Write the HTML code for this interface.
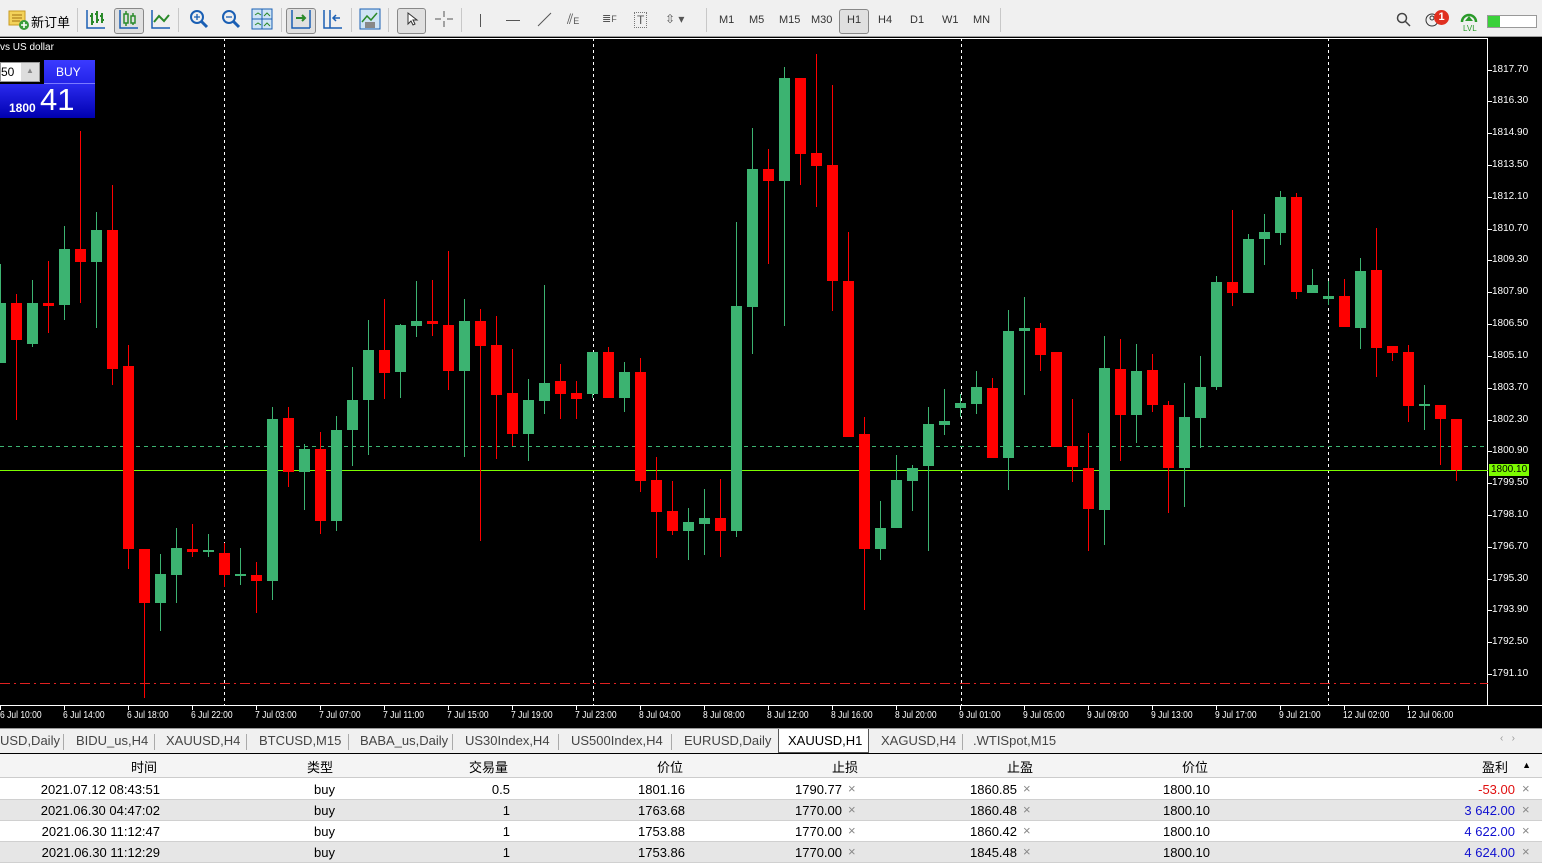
<!DOCTYPE html>
<html><head><meta charset="utf-8">
<style>
*{margin:0;padding:0;box-sizing:border-box}
body{width:1542px;height:866px;overflow:hidden;background:#000;font-family:"Liberation Sans","Noto Sans CJK SC",sans-serif;position:relative}
#tb{position:absolute;left:0;top:0;width:1542px;height:37px;background:#f0f0f0;border-bottom:1px solid #a0a0a0}
.ic{position:absolute;top:8px}
.sep{position:absolute;top:8px;width:1px;height:24px;background:#c8c8c8}
.tf{position:absolute;top:14px;font-size:11px;color:#333}
#chart{position:absolute;left:0;top:38px;width:1542px;height:690px;background:#000}
.pl{position:absolute;left:1492px;font-size:10px;color:#fff;font-family:"Liberation Sans",sans-serif}
.tl{position:absolute;top:710px;font-size:10px;color:#fff;white-space:nowrap;transform:scaleX(.85);transform-origin:left}
#tabs{position:absolute;left:0;top:728px;width:1542px;height:25px;background:#f0f0f0;border-top:1px solid #999}
.tab{position:absolute;top:4px;font-size:13px;color:#444;white-space:nowrap}
.ts{position:absolute;top:5px;width:1px;height:16px;background:#aaa}
#tbl{position:absolute;left:0;top:754px;width:1542px;height:112px;background:#fff;font-size:13px;color:#000}
.row{position:absolute;left:0;width:1542px;height:21px;border-bottom:1px solid #d0d0d0}
.c{position:absolute;top:3px;text-align:right;white-space:nowrap}
.x{position:absolute;top:2px;color:#888;font-size:13px}
</style></head><body>
<div id="tb">
 <svg class="ic" style="left:8px;top:9px" width="22" height="22"><rect x="1" y="2" width="16" height="14" fill="#f3d25a" stroke="#c89a20"/><line x1="4" y1="6" x2="14" y2="6" stroke="#a07010"/><line x1="4" y1="9" x2="14" y2="9" stroke="#a07010"/><line x1="4" y1="12" x2="12" y2="12" stroke="#a07010"/><circle cx="16" cy="16" r="5" fill="#3a9d3a"/><path d="M16 13v6M13 16h6" stroke="#fff" stroke-width="1.6"/></svg>
 <div style="position:absolute;left:31px;top:12px;font-size:13px;color:#000">新订单</div>
 <div class="sep" style="left:77px"></div>
 <svg class="ic" style="left:85px" width="22" height="22" stroke="#1a5fb4" fill="none" stroke-width="1.5"><path d="M2 2v18h18"/><path d="M7 5v12M5 8h2M7 14h2M12 3v12M10 6h2M12 12h2M17 5v10M15 8h2M17 12h2" stroke="#2a8a2a" stroke-width="2"/></svg>
 <div style="position:absolute;left:114px;top:8px;width:30px;height:26px;border:1px solid #888;border-radius:3px;background:#e0e0e0"></div>
 <svg class="ic" style="left:118px" width="22" height="22" stroke="#1a5fb4" fill="none" stroke-width="1.5"><path d="M2 2v18h18"/><rect x="6" y="6" width="4" height="9" stroke="#2a8a2a"/><rect x="13" y="8" width="4" height="7" stroke="#2a8a2a"/><path d="M8 3v3M8 15v3M15 5v3M15 15v2" stroke="#2a8a2a"/></svg>
 <svg class="ic" style="left:150px" width="22" height="22" stroke="#1a5fb4" fill="none" stroke-width="1.5"><path d="M2 2v18h18"/><path d="M4 14l5-6 5 5 5-6" stroke="#2a8a2a" stroke-width="2"/></svg>
 <div class="sep" style="left:178px"></div>
 <svg class="ic" style="left:188px" width="22" height="22" fill="none" stroke="#1a5fb4" stroke-width="2"><circle cx="9" cy="9" r="6"/><path d="M13 13l6 6" stroke-width="3"/><path d="M6 9h6M9 6v6" stroke-width="1.3"/></svg>
 <svg class="ic" style="left:220px" width="22" height="22" fill="none" stroke="#1a5fb4" stroke-width="2"><circle cx="9" cy="9" r="6"/><path d="M13 13l6 6" stroke-width="3"/><path d="M6 9h6" stroke-width="1.3"/></svg>
 <svg class="ic" style="left:251px" width="22" height="22"><rect x="1" y="1" width="20" height="20" fill="#cfe4f5" stroke="#1a5fb4"/><path d="M1 11h20M11 1v20" stroke="#1a5fb4"/><path d="M4 7l3-2 3 2M13 8l3-3 3 3M4 17l3-2 3 2M13 18l3-3 3 3" stroke="#2a8a2a" fill="none"/></svg>
 <div class="sep" style="left:281px"></div>
 <div style="position:absolute;left:286px;top:8px;width:30px;height:26px;border:1px solid #888;border-radius:3px;background:#e0e0e0"></div>
 <svg class="ic" style="left:290px" width="22" height="22" fill="none" stroke="#1a5fb4" stroke-width="1.5"><path d="M2 2v18h18M20 2v18"/><path d="M6 10h9M12 7l3 3-3 3" stroke="#2a8a2a" stroke-width="2"/></svg>
 <svg class="ic" style="left:322px" width="22" height="22" fill="none" stroke="#1a5fb4" stroke-width="1.5"><path d="M2 2v18h18M8 2v18"/><path d="M18 10h-6M14 7l-3 3 3 3" stroke="#1a5fb4"/></svg>
 <div class="sep" style="left:351px"></div>
 <svg class="ic" style="left:359px" width="22" height="22"><rect x="1" y="1" width="20" height="20" fill="#cfe4f5" stroke="#1a5fb4"/><path d="M3 14l5-6 4 4 6-7" stroke="#2a8a2a" fill="none" stroke-width="1.5"/><rect x="6" y="14" width="10" height="6" fill="#888"/></svg>
 <div class="sep" style="left:388px"></div>
 <div style="position:absolute;left:397px;top:8px;width:29px;height:26px;border:1px solid #888;border-radius:3px;background:#e0e0e0"></div>
 <svg class="ic" style="left:403px" width="18" height="22"><path d="M5 5v11l3-3 2 4 2-1-2-4h4z" fill="#fff" stroke="#333"/></svg>
 <svg class="ic" style="left:433px" width="22" height="22" stroke="#555"><path d="M11 3v6M11 13v6M2 11h6M14 11h6"/></svg>
 <div class="sep" style="left:461px"></div>
 <div style="position:absolute;left:480px;top:14px;width:1px;height:13px;background:#555"></div>
 <div style="position:absolute;left:506px;top:20px;width:14px;height:1px;background:#555"></div>
 <svg class="ic" style="left:535px" width="20" height="22"><path d="M3 18L16 5" stroke="#555"/></svg>
 <div style="position:absolute;left:567px;top:11px;font-size:14px;color:#555">⫽<span style="font-size:9px">E</span></div>
 <div style="position:absolute;left:602px;top:12px;font-size:11px;color:#555">≣<span style="font-size:9px">F</span></div>
 <div style="position:absolute;left:634px;top:12px;font-size:12px;color:#555;border:1px dotted #777;padding:0 2px">T</div>
 <div style="position:absolute;left:665px;top:12px;font-size:12px;color:#555">⇳ ▾</div>
 <div class="sep" style="left:706px"></div>
 <div class="tf" style="left:719px">M1</div><div class="tf" style="left:749px">M5</div><div class="tf" style="left:779px">M15</div><div class="tf" style="left:811px">M30</div>
 <div style="position:absolute;left:839px;top:9px;width:30px;height:25px;border:1px solid #888;border-radius:3px;background:#e0e0e0"></div>
 <div class="tf" style="left:847px">H1</div><div class="tf" style="left:878px">H4</div><div class="tf" style="left:910px">D1</div><div class="tf" style="left:942px">W1</div><div class="tf" style="left:973px">MN</div>
 <div class="sep" style="left:1000px"></div>
 <svg class="ic" style="left:1396px;top:12px" width="16" height="16" fill="none" stroke="#444" stroke-width="1.5"><circle cx="6" cy="6" r="4.5"/><path d="M9 9l5 5"/></svg>
 <svg class="ic" style="left:1425px;top:12px" width="16" height="16" fill="none" stroke="#333"><circle cx="7" cy="8" r="6"/><circle cx="7" cy="6" r="2"/></svg>
 <div style="position:absolute;left:1434px;top:10px;width:15px;height:15px;border-radius:50%;background:#e03020;color:#fff;font-size:11px;text-align:center;line-height:15px;font-weight:bold">1</div>
 <svg class="ic" style="left:1459px;top:10px" width="20" height="22"><path d="M3 12a7 7 0 0 1 14 0" stroke="#2a9a2a" stroke-width="2.5" fill="none"/><path d="M10 6l-4 5h8z" fill="#2a9a2a"/><text x="4" y="21" font-size="8" fill="#2a9a2a" font-family="Liberation Sans">LVL</text></svg>
 <div style="position:absolute;left:1487px;top:15px;width:50px;height:13px;border:1px solid #999;background:#fff"><div style="width:12px;height:11px;background:#3ad13a"></div></div>
</div>
<div id="chart">
<svg id="sv" width="1542" height="690" style="position:absolute;left:0;top:0"></svg>
<div style="position:absolute;left:0;top:4px;font-size:10px;color:#fff">vs US dollar</div>
<div style="position:absolute;left:0;top:24px;width:40px;height:20px;background:#fff;border:1px solid #999;font-size:12px;line-height:18px;color:#000">50</div>
<div style="position:absolute;left:21px;top:25px;width:18px;height:18px;background:#ddd;font-size:8px;text-align:center;line-height:16px;color:#888">▲</div>
<div style="position:absolute;left:44px;top:22px;width:51px;height:58px;background:linear-gradient(#3b3bff,#0000c8)"></div>
<div style="position:absolute;left:0;top:46px;width:95px;height:34px;background:linear-gradient(#2a2aee,#0000b0)"></div>
<div style="position:absolute;left:44px;top:45px;width:51px;height:1px;background:#7a7aff"></div>
<div style="position:absolute;left:56px;top:27px;font-size:12px;color:#fff">BUY</div>
<div style="position:absolute;left:9px;top:63px;font-size:12px;color:#fff;font-weight:bold">1800</div>
<div style="position:absolute;left:40px;top:44px;font-size:31px;color:#fff">41</div>
<div class="pl" style="top:26px">1817.70</div><div class="pl" style="top:57px">1816.30</div><div class="pl" style="top:89px">1814.90</div><div class="pl" style="top:121px">1813.50</div><div class="pl" style="top:153px">1812.10</div><div class="pl" style="top:185px">1810.70</div><div class="pl" style="top:216px">1809.30</div><div class="pl" style="top:248px">1807.90</div><div class="pl" style="top:280px">1806.50</div><div class="pl" style="top:312px">1805.10</div><div class="pl" style="top:344px">1803.70</div><div class="pl" style="top:376px">1802.30</div><div class="pl" style="top:407px">1800.90</div><div class="pl" style="top:439px">1799.50</div><div class="pl" style="top:471px">1798.10</div><div class="pl" style="top:503px">1796.70</div><div class="pl" style="top:535px">1795.30</div><div class="pl" style="top:566px">1793.90</div><div class="pl" style="top:598px">1792.50</div><div class="pl" style="top:630px">1791.10</div>
<div style="position:absolute;left:1489px;top:426px;width:40px;height:12px;background:#7cfc00;color:#000;font-size:10px;line-height:12px;padding-left:2px">1800.10</div>
</div>
<div style="position:absolute;left:0;top:0;width:1542px;height:0">
<div class="tl" style="left:0">6 Jul 10:00</div><div class="tl" style="left:63px">6 Jul 14:00</div><div class="tl" style="left:127px">6 Jul 18:00</div><div class="tl" style="left:191px">6 Jul 22:00</div><div class="tl" style="left:255px">7 Jul 03:00</div><div class="tl" style="left:319px">7 Jul 07:00</div><div class="tl" style="left:383px">7 Jul 11:00</div><div class="tl" style="left:447px">7 Jul 15:00</div><div class="tl" style="left:511px">7 Jul 19:00</div><div class="tl" style="left:575px">7 Jul 23:00</div><div class="tl" style="left:639px">8 Jul 04:00</div><div class="tl" style="left:703px">8 Jul 08:00</div><div class="tl" style="left:767px">8 Jul 12:00</div><div class="tl" style="left:831px">8 Jul 16:00</div><div class="tl" style="left:895px">8 Jul 20:00</div><div class="tl" style="left:959px">9 Jul 01:00</div><div class="tl" style="left:1023px">9 Jul 05:00</div><div class="tl" style="left:1087px">9 Jul 09:00</div><div class="tl" style="left:1151px">9 Jul 13:00</div><div class="tl" style="left:1215px">9 Jul 17:00</div><div class="tl" style="left:1279px">9 Jul 21:00</div><div class="tl" style="left:1343px">12 Jul 02:00</div><div class="tl" style="left:1407px">12 Jul 06:00</div>
</div>
<div id="tabs">
<div class="tab" style="left:0">USD,Daily</div><div class="ts" style="left:63px"></div>
<div class="tab" style="left:76px">BIDU_us,H4</div><div class="ts" style="left:154px"></div>
<div class="tab" style="left:166px">XAUUSD,H4</div><div class="ts" style="left:246px"></div>
<div class="tab" style="left:259px">BTCUSD,M15</div><div class="ts" style="left:348px"></div>
<div class="tab" style="left:360px">BABA_us,Daily</div><div class="ts" style="left:452px"></div>
<div class="tab" style="left:465px">US30Index,H4</div><div class="ts" style="left:558px"></div>
<div class="tab" style="left:571px">US500Index,H4</div><div class="ts" style="left:671px"></div>
<div class="tab" style="left:684px">EURUSD,Daily</div>
<div style="position:absolute;left:778px;top:0;width:91px;height:24px;background:#fff;border:1px solid #555;border-top:none"></div>
<div class="tab" style="left:788px;color:#000">XAUUSD,H1</div>
<div class="tab" style="left:881px">XAGUSD,H4</div><div class="ts" style="left:962px"></div>
<div class="tab" style="left:973px">.WTISpot,M15</div>
<div class="tab" style="left:1500px;font-size:10px;color:#999">‹ &nbsp; ›</div>
</div>
<div id="tbl">
<div class="row" style="top:0;height:24px;background:#f4f4f4;border-bottom:1px solid #ccc">
<div class="c" style="right:1385px">时间</div><div class="c" style="right:1209px">类型</div><div class="c" style="right:1034px">交易量</div><div class="c" style="right:859px">价位</div><div class="c" style="right:684px">止损</div><div class="c" style="right:509px">止盈</div><div class="c" style="right:334px">价位</div><div class="c" style="right:34px">盈利</div><div class="c" style="right:11px;font-size:9px;top:6px">▲</div>
</div>
<div id="rows"></div>
</div>
<script>
var d=[["g",264,303,363,363],["r",294,303,340,420],["g",280,303,344,347],["r",261,303,306,333],["g",226,249,305,320],["r",131,249,262,303],["g",212,230,262,328],["r",185,230,369,385],["r",345,366,549,569],["r",549,549,603,698],["g",554,574,603,631],["g",528,548,575,603],["r",524,549,552,557],["g",534,550,552,557],["r",543,553,575,587],["g",548,574,576,585],["r",562,575,581,613],["g",407,419,581,600],["r",407,418,472,487],["g",444,449,472,510],["r",432,449,521,534],["g",416,430,521,531],["g",367,400,430,466],["g",320,350,400,455],["r",299,350,373,399],["g",324,325,372,398],["g",281,321,326,337],["r",280,321,324,336],["r",251,325,371,390],["g",299,321,371,457],["r",309,321,346,541],["r",316,345,395,459],["r",349,393,434,446],["g",379,400,434,461],["g",285,383,401,414],["r",364,381,394,419],["r",381,393,399,419],["g",352,352,394,398],["r",347,352,398,398],["g",362,372,398,412],["r",358,372,481,492],["r",457,480,512,558],["r",481,511,531,535],["g",508,522,531,560],["g",489,518,524,555],["r",479,518,531,557],["g",222,306,531,537],["g",128,169,307,354],["r",149,169,181,264],["g",67,78,181,326],["r",78,78,154,185],["r",54,153,166,207],["r",85,165,281,311],["r",232,281,437,437],["r",417,434,549,610],["g",501,528,549,560],["g",455,480,528,528],["g",465,468,481,511],["g",407,424,466,551],["g",389,421,425,435],["g",394,403,408,417],["g",371,387,404,414],["r",378,388,458,458],["g",310,331,458,490],["g",297,328,331,395],["r",323,328,355,371],["r",352,352,447,447],["r",399,446,467,482],["r",433,468,509,551],["g",336,368,510,545],["r",339,369,415,461],["g",344,371,415,443],["r",354,370,405,412],["r",401,405,468,513],["g",383,417,468,507],["g",356,387,418,448],["g",276,282,387,390],["r",210,282,293,306],["g",234,239,293,293],["g",214,232,239,265],["g",191,197,233,245],["r",193,197,292,299],["g",269,285,293,293],["g",281,296,299,305],["r",279,296,327,327],["g",258,271,328,349],["r",228,270,348,377],["r",346,346,353,361],["r",345,352,406,422],["g",385,404,406,430],["r",405,405,419,465],["r",419,419,470,481]];
var s='';
s+='<line x1="1487.5" y1="0" x2="1487.5" y2="668" stroke="#fff"/><line x1="0" y1="0.5" x2="1488" y2="0.5" stroke="#fff"/><line x1="0" y1="667.5" x2="1542" y2="667.5" stroke="#fff"/>';
[224,593,961,1328].forEach(function(x){s+='<line x1="'+(x+.5)+'" y1="0" x2="'+(x+.5)+'" y2="667" stroke="#fff" stroke-dasharray="3,3"/>';});
s+='<line x1="0" y1="408.5" x2="1488" y2="408.5" stroke="#3cb371" stroke-dasharray="4,4"/>';
s+='<line x1="0" y1="432.5" x2="1488" y2="432.5" stroke="#7cfc00"/>';
s+='<line x1="0" y1="645.5" x2="1488" y2="645.5" stroke="#e02020" stroke-dasharray="10,4,2,4"/>';
[32,63,95,127,159,191,222,254,286,318,350,382,413,445,477,509,541,572,604,636].forEach(function(y){s+='<line x1="1488" y1="'+(y+.5)+'" x2="1492" y2="'+(y+.5)+'" stroke="#fff"/>';});
for(var i=0;i<23;i++){var x=i*64+0.5;s+='<line x1="'+x+'" y1="667" x2="'+x+'" y2="672" stroke="#fff"/>';}
d.forEach(function(c,k){var x=k*16,col=c[0]=='g'?'#3cb371':'#ff0000',o=38;
s+='<line x1="'+(x+.5)+'" y1="'+(c[1]-o)+'" x2="'+(x+.5)+'" y2="'+(c[4]-o)+'" stroke="'+col+'"/>';
var h=Math.max(c[3]-c[2],2);s+='<rect x="'+(x-5)+'" y="'+(c[2]-o)+'" width="11" height="'+h+'" fill="'+col+'"/>';});
document.getElementById('sv').innerHTML=s;
var rows=[["2021.07.12 08:43:51","0.5","1801.16","1790.77","1860.85","-53.00"],["2021.06.30 04:47:02","1","1763.68","1770.00","1860.48","3 642.00"],["2021.06.30 11:12:47","1","1753.88","1770.00","1860.42","4 622.00"],["2021.06.30 11:12:29","1","1753.86","1770.00","1845.48","4 624.00"]];
var r='';rows.forEach(function(w,i){var t=25+i*21;r+='<div class="row" style="top:'+t+'px;background:'+(i%2?'#e6e6e6':'#fff')+'"><div class="c" style="right:1382px">'+w[0]+'</div><div class="c" style="right:1207px">buy</div><div class="c" style="right:1032px">'+w[1]+'</div><div class="c" style="right:857px">'+w[2]+'</div><div class="c" style="right:700px">'+w[3]+'</div><div class="x" style="left:848px">×</div><div class="c" style="right:525px">'+w[4]+'</div><div class="x" style="left:1023px">×</div><div class="c" style="right:332px">1800.10</div><div class="c" style="right:27px;color:'+(i?'#1010d0':'#e01010')+'">'+w[5]+'</div><div class="x" style="left:1522px">×</div></div>';});
document.getElementById('rows').innerHTML=r;
</script>
</body></html>
